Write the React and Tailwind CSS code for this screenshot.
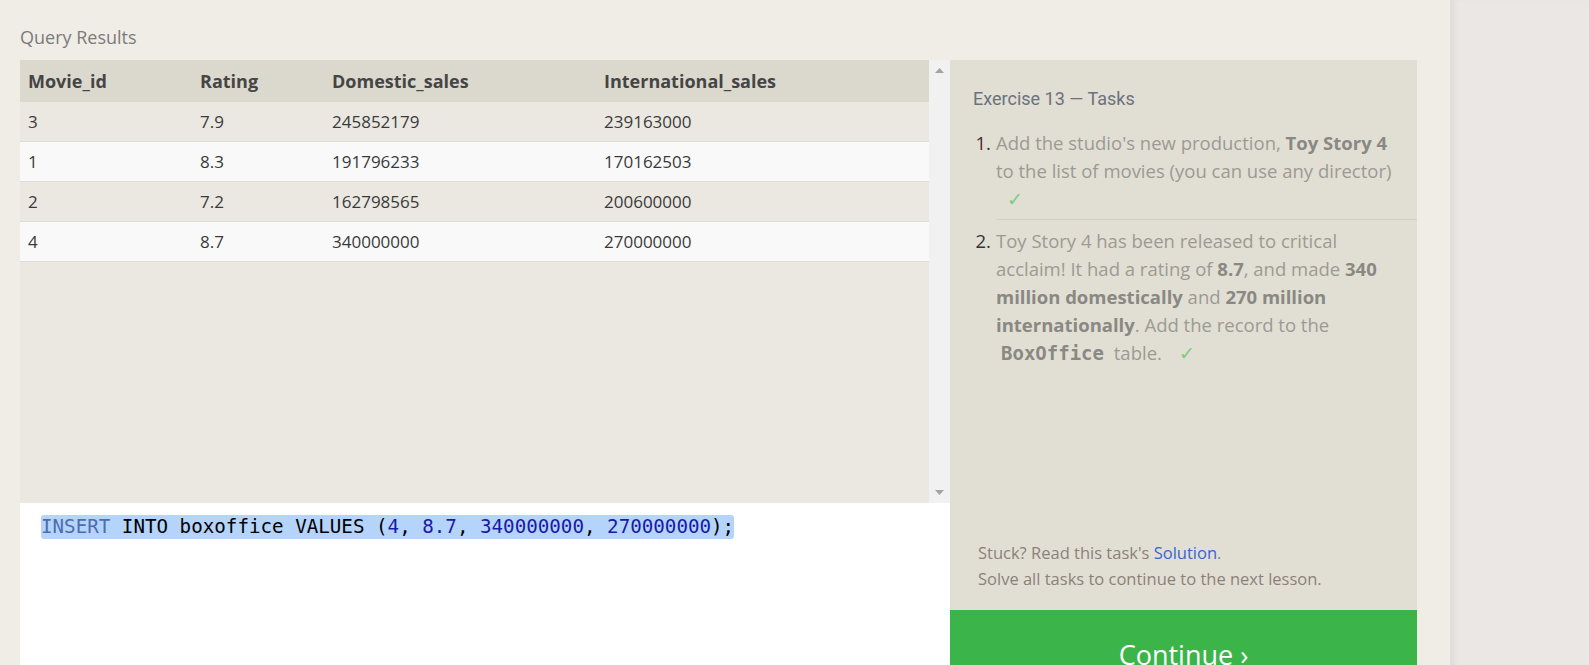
import React from "react";

const rows = [
  ["3", "7.9", "245852179", "239163000"],
  ["1", "8.3", "191796233", "170162503"],
  ["2", "7.2", "162798565", "200600000"],
  ["4", "8.7", "340000000", "270000000"],
];

const font = { fontFamily: '"Open Sans", "Noto Sans", sans-serif' };
const mono = { fontFamily: '"DejaVu Sans Mono", "Liberation Mono", monospace' };

export default function App() {
  return (
    <div className="flex h-[665px] w-[1589px] overflow-hidden" style={font}>
      <div className="w-[1450px] shrink-0 bg-[#f0ede6] pl-[20px]">
        <div className="h-[60px] pt-[23px] text-[18px] leading-[28px] text-[#7b7b7b]">Query Results</div>
        <div className="flex h-[605px]">
          {/* left column */}
          <div className="flex w-[930px] flex-col">
            <div className="flex h-[443px] bg-[#eae8e1]">
              <div className="flex-1">
                <div className="flex h-[42px] items-center bg-[#dbd9ce] text-[18px] font-bold text-[#454545]">
                  <div className="w-[172px] pl-[8px]">Movie_id</div>
                  <div className="w-[132px] pl-[8px]">Rating</div>
                  <div className="w-[272px] pl-[8px]">Domestic_sales</div>
                  <div className="flex-1 pl-[8px]">International_sales</div>
                </div>
                {rows.map((r, i) => (
                  <div
                    key={i}
                    className={
                      "flex h-[40px] items-center border-b border-[#dddcd7] text-[17px] text-[#3a3a3a] " +
                      (i % 2 === 0 ? "bg-[#eae8e1]" : "bg-[#f9f9f9]")
                    }
                  >
                    <div className="w-[172px] pl-[8px]">{r[0]}</div>
                    <div className="w-[132px] pl-[8px]">{r[1]}</div>
                    <div className="w-[272px] pl-[8px]">{r[2]}</div>
                    <div className="flex-1 pl-[8px]">{r[3]}</div>
                  </div>
                ))}
              </div>
              <div className="flex w-[21px] flex-col items-center justify-between bg-[#f1f1f1] py-[8px]">
                <svg width="9" height="5" viewBox="0 0 9 5"><polygon points="0,5 9,5 4.5,0" fill="#a3a3a3" /></svg>
                <svg width="9" height="5" viewBox="0 0 9 5"><polygon points="0,0 9,0 4.5,5" fill="#a3a3a3" /></svg>
              </div>
            </div>
            <div className="flex-1 bg-white pl-[21px] pt-[12px]">
              <span
                className="inline-block rounded-[3px] bg-[#b4d4fc] text-[19.2px] leading-[24px] whitespace-pre text-black"
                style={mono}
              >
                <span className="text-[#4f6cae]">INSERT</span>{" INTO boxoffice VALUES ("}
                <span className="text-[#1a1aa8]">4</span>{", "}
                <span className="text-[#1a1aa8]">8.7</span>{", "}
                <span className="text-[#1a1aa8]">340000000</span>{", "}
                <span className="text-[#1a1aa8]">270000000</span>{");"}
              </span>
            </div>
          </div>
          {/* right panel */}
          <div className="flex w-[467px] flex-col bg-[#e1dfd4]">
            <div
              className="pl-[23px] pt-[25px] text-[18px] leading-[28px] text-[#6c727c]"
              style={{ fontFamily: 'Roboto, "Open Sans", sans-serif' }}
            >
              Exercise 13 — Tasks
            </div>
            <div className="mt-[16px] text-[18.5px] leading-[28px] text-[#9c9a93]">
              <div className="flex">
                <div className="w-[46px] shrink-0 pr-[5px] text-right text-[#4a2b2b]">1.</div>
                <div className="flex-1 border-b border-[#d3d1c7] pb-[6px] whitespace-nowrap">
                  Add the studio's new production, <b className="text-[#8a8883]">Toy Story 4</b>
                  <br />
                  to the list of movies (you can use any director)
                  <br />
                  <span className="pl-[11px] text-[#7fcc7f]">✓</span>
                </div>
              </div>
              <div className="flex pt-[7px]">
                <div className="w-[46px] shrink-0 pr-[5px] text-right text-[#333]">2.</div>
                <div className="flex-1 whitespace-nowrap">
                  Toy Story 4 has been released to critical
                  <br />
                  acclaim! It had a rating of <b className="text-[#8a8883]">8.7</b>, and made{" "}
                  <b className="text-[#8a8883]">340</b>
                  <br />
                  <b className="text-[#8a8883]">million domestically</b> and{" "}
                  <b className="text-[#8a8883]">270 million</b>
                  <br />
                  <b className="text-[#8a8883]">internationally</b>. Add the record to the
                  <br />
                  <span className="px-[5px] text-[19px] font-bold text-[#8a8883]" style={mono}>
                    BoxOffice
                  </span>{" "}
                  table. <span className="pl-[12px] text-[#7fcc7f]">✓</span>
                </div>
              </div>
            </div>
            <div className="flex-1" />
            <div className="pb-[18px] pl-[28px] text-[16.5px] leading-[26px] text-[#8c8179]">
              <div>
                Stuck? Read this task's <span className="text-[#3a63d6]">Solution</span>.
              </div>
              <div>Solve all tasks to continue to the next lesson.</div>
            </div>
            <div className="h-[55px] shrink-0 bg-[#3bb54a] pt-[28px] text-center text-[27px] leading-[34px] text-white">
              Continue ›
            </div>
          </div>
        </div>
      </div>
      <div className="flex-1 bg-[#ebe7e4] shadow-[inset_8px_0_10px_-6px_rgba(0,0,0,0.08)]" />
    </div>
  );
}
